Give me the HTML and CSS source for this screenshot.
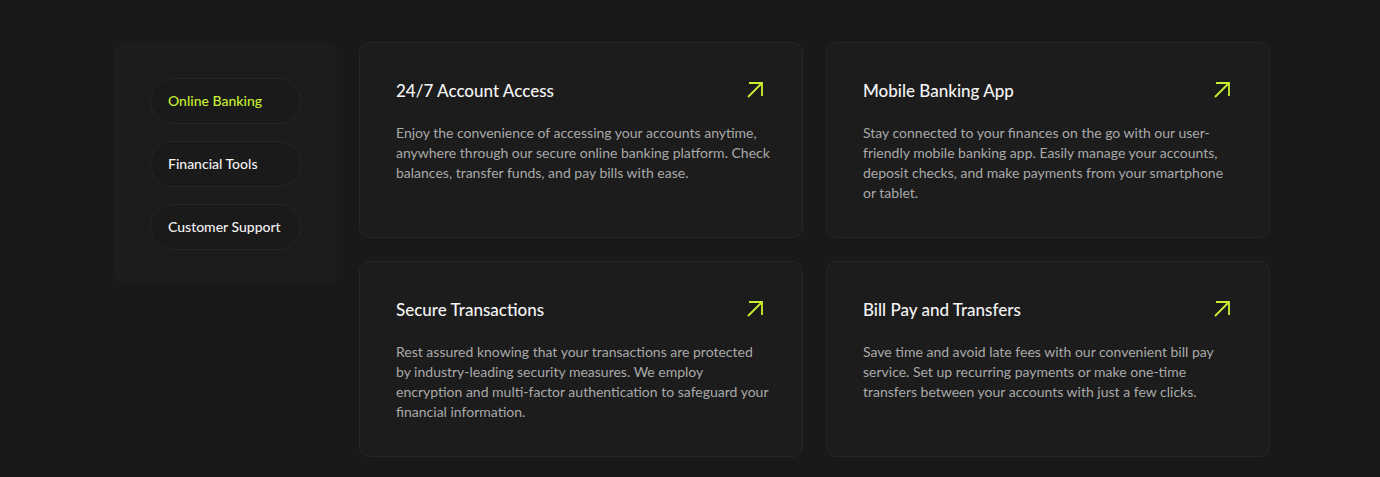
FILE: index.html
```html
<!DOCTYPE html>
<html lang="en">
<head>
<meta charset="utf-8">
<title>Banking Services</title>
<link rel="stylesheet" href="styles.css">
</head>
<body>
<main class="page">
  <aside class="sidebar">
    <button class="tab active">Online Banking</button>
    <button class="tab">Financial Tools</button>
    <button class="tab">Customer Support</button>
  </aside>
  <section class="grid">
    <article class="card">
      <div class="card-head">
        <h3 class="card-title">24/7 Account Access</h3>
        <svg class="arrow" viewBox="0 0 24 24" width="24" height="24"><path d="M5 19L19 5M6 5H19V18"/></svg>
      </div>
      <p class="card-text">Enjoy the convenience of accessing your accounts anytime, anywhere through our secure online banking platform. Check balances, transfer funds, and pay bills with ease.</p>
    </article>
    <article class="card">
      <div class="card-head">
        <h3 class="card-title">Mobile Banking App</h3>
        <svg class="arrow" viewBox="0 0 24 24" width="24" height="24"><path d="M5 19L19 5M6 5H19V18"/></svg>
      </div>
      <p class="card-text">Stay connected to your finances on the go with our user-friendly mobile banking app. Easily manage your accounts, deposit checks, and make payments from your smartphone or tablet.</p>
    </article>
    <article class="card">
      <div class="card-head">
        <h3 class="card-title">Secure Transactions</h3>
        <svg class="arrow" viewBox="0 0 24 24" width="24" height="24"><path d="M5 19L19 5M6 5H19V18"/></svg>
      </div>
      <p class="card-text">Rest assured knowing that your transactions are protected by industry-leading security measures. We employ encryption and multi-factor authentication to safeguard your financial information.</p>
    </article>
    <article class="card">
      <div class="card-head">
        <h3 class="card-title">Bill Pay and Transfers</h3>
        <svg class="arrow" viewBox="0 0 24 24" width="24" height="24"><path d="M5 19L19 5M6 5H19V18"/></svg>
      </div>
      <p class="card-text">Save time and avoid late fees with our convenient bill pay service. Set up recurring payments or make one-time transfers between your accounts with just a few clicks.</p>
    </article>
  </section>
</main>
</body>
</html>
```

FILE: styles.css
```css
* { box-sizing: border-box; }
html, body {
  margin: 0;
  background: #191919;
  font-family: "Lato", "Noto Sans", sans-serif;
}
.page {
  display: flex;
  align-items: flex-start;
  gap: 22px;
  padding: 42px 0 0 114px;
}
.sidebar {
  width: 223px;
  flex: none;
  display: flex;
  flex-direction: column;
  align-items: flex-start;
  gap: 17px;
  padding: 36px 36px 35px;
  background: #1c1c1c;
  border-radius: 10px;
}
.tab {
  width: 151px;
  height: 46px;
  padding: 0 0 2px 17px;
  text-align: left;
  background: #1a1a1a;
  border: 1px solid #262626;
  border-radius: 24px;
  color: #f2f2f2;
  font-family: inherit;
  font-size: 14px;
  font-weight: 500;
}
.tab.active { color: #c8f031; }
.grid {
  display: grid;
  grid-template-columns: 444px 444px;
  grid-auto-rows: 196px;
  column-gap: 23px;
  row-gap: 23px;
}
.card {
  background: #1c1c1c;
  border: 1px solid #262626;
  border-radius: 10px;
  padding: 35px 35px 0 36px;
}
.card-head {
  display: flex;
  align-items: center;
  justify-content: space-between;
  height: 24px;
}
.card-title {
  margin: 0;
  color: #f4f4f4;
  font-size: 17px;
  font-weight: 500;
}
.arrow {
  flex: none;
  fill: none;
  stroke: #c8f031;
  stroke-width: 1.8;
}
.card-text {
  width: 374.5px;
  margin: 21px 0 0;
  color: #a9a9a9;
  font-size: 14px;
  line-height: 20px;
}
```
